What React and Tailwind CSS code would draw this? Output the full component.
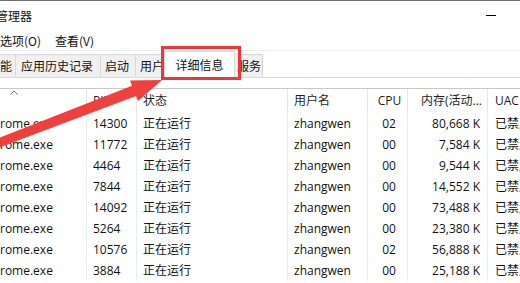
import React from "react";

const ROWS = [
  { pid: "14300", cpu: "02", mem: "80,668 K" },
  { pid: "11772", cpu: "00", mem: "7,584 K" },
  { pid: "4464", cpu: "00", mem: "9,544 K" },
  { pid: "7844", cpu: "00", mem: "14,552 K" },
  { pid: "14092", cpu: "00", mem: "73,488 K" },
  { pid: "5264", cpu: "00", mem: "23,380 K" },
  { pid: "10576", cpu: "02", mem: "56,888 K" },
  { pid: "3884", cpu: "00", mem: "25,188 K" },
];

function Tab({ children, className = "" }) {
  return (
    <div
      className={
        "flex h-[23px] shrink-0 items-center overflow-hidden whitespace-nowrap border-r border-t border-[#d9d9d9] bg-[#f0f0f0] " +
        className
      }
    >
      {children}
    </div>
  );
}

function RedArrow() {
  return (
    <svg
      className="pointer-events-none absolute left-0 top-0"
      width="520"
      height="283"
      viewBox="0 0 520 283"
    >
      <polygon
        points="162,80 138,101 136,96 -3.4,148.6 -6.6,140.2 132,85.7 130,80.5"
        fill="#f0403c"
      />
    </svg>
  );
}

export default function App() {
  return (
    <div className="relative h-[283px] w-[520px] overflow-hidden bg-white font-['Open_Sans','Noto_Sans_CJK_SC',sans-serif] text-[12px] text-[#111]">
      <div className="h-px bg-[#707070]" />

      {/* title */}
      <div className="flex h-[30px] items-center justify-between">
        <div className="-ml-[4px] font-['Noto_Sans_CJK_SC',sans-serif] text-[12px]">
          管理器
        </div>
        <div className="mr-[24px] mt-[-2px] h-px w-[10px] bg-black" />
      </div>

      {/* menu */}
      <div className="flex h-[19px] items-center gap-[14px] font-['Noto_Sans_CJK_SC',sans-serif]">
        <span>选项(O)</span>
        <span>查看(V)</span>
      </div>

      <div className="h-px bg-[#efefef]" />

      {/* tabs */}
      <div className="flex h-[27px] items-end border-b border-[#d9d9d9] font-['Noto_Sans_CJK_SC',sans-serif]">
        <Tab className="w-[16px] justify-end pr-[3px]">性能</Tab>
        <Tab className="w-[85px] pl-[5px]">应用历史记录</Tab>
        <Tab className="w-[35px] pl-[4px]">启动</Tab>
        <Tab className="w-[30px] pl-[4px]">用户</Tab>
        <div className="relative z-10 -mb-px -ml-[2px] flex h-[27px] w-[71px] shrink-0 items-center justify-center border-x border-t border-[#d9d9d9] bg-white">
          详细信息
        </div>
        <Tab className="-ml-px w-[29px] pl-[3px]">服务</Tab>
      </div>

      <div className="h-[11px] border-b border-[#c8c8c8]" />

      {/* header */}
      <div className="flex h-[24px] items-center text-[#1e1e1e]">
        <div className="relative h-full w-[87px] shrink-0 border-r border-[#e5e5e5]">
          <svg
            className="absolute left-[10px] top-[1px]"
            width="8"
            height="5"
            viewBox="0 0 8 5"
          >
            <path d="M0.5 4.5 L4 1 L7.5 4.5" fill="none" stroke="#777" />
          </svg>
        </div>
        <div className="flex h-full w-[50px] shrink-0 items-center border-r border-[#e5e5e5] pl-[6px]">
          PID
        </div>
        <div className="flex h-full w-[151px] shrink-0 items-center border-r border-[#e5e5e5] pl-[6px]">
          状态
        </div>
        <div className="flex h-full w-[80px] shrink-0 items-center border-r border-[#e5e5e5] pl-[6px]">
          用户名
        </div>
        <div className="flex h-full w-[40px] shrink-0 items-center justify-center border-r border-[#e5e5e5] pl-[4px]">
          CPU
        </div>
        <div className="flex h-full w-[80px] shrink-0 items-center justify-end whitespace-nowrap border-r border-[#e5e5e5] pr-[5px]">
          内存(活动...
        </div>
        <div className="flex h-full items-center whitespace-nowrap pl-[7px]">UAC</div>
      </div>

      {/* rows */}
      {ROWS.map((r) => (
        <div key={r.pid} className="flex h-[21px] items-center">
          <div className="flex h-full w-[87px] shrink-0 items-center border-r border-[#e8edf5]">
            rome.exe
          </div>
          <div className="flex h-full w-[50px] shrink-0 items-center border-r border-[#e8edf5] pl-[6px]">
            {r.pid}
          </div>
          <div className="flex h-full w-[151px] shrink-0 items-center border-r border-[#e8edf5] pl-[6px]">
            正在运行
          </div>
          <div className="flex h-full w-[80px] shrink-0 items-center border-r border-[#e8edf5] pl-[6px]">
            zhangwen
          </div>
          <div className="flex h-full w-[40px] shrink-0 items-center justify-center border-r border-[#e8edf5] pl-[3px]">
            {r.cpu}
          </div>
          <div className="flex h-full w-[80px] shrink-0 items-center justify-end border-r border-[#e8edf5] pr-[7px]">
            {r.mem}
          </div>
          <div className="flex h-full items-center whitespace-nowrap pl-[7px]">已禁用</div>
        </div>
      ))}

      {/* annotations */}
      <div className="pointer-events-none absolute left-[161px] top-[46px] z-20 h-[34px] w-[80px] border-[3px] border-[#e8383d]" />
      <div className="absolute left-0 top-0 z-20">
        <RedArrow />
      </div>
    </div>
  );
}
